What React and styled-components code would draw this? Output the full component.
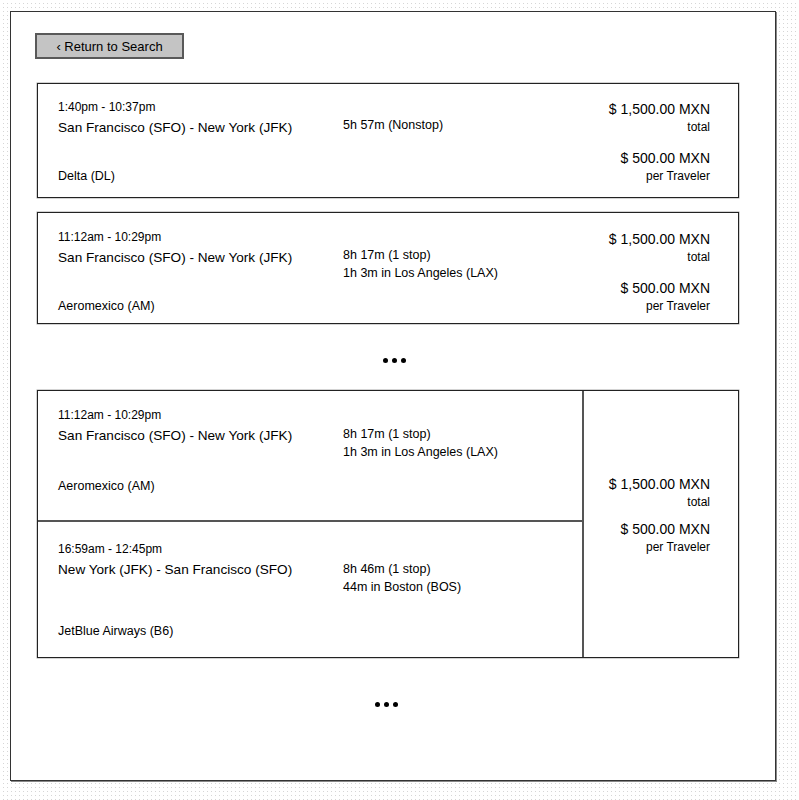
import styled, { createGlobalStyle } from "styled-components";

const GlobalStyle = createGlobalStyle`
  body {
    margin: 0;
    background-color: #fff;
    background-image:
      linear-gradient(to right, #fff 3px, transparent 3px),
      linear-gradient(to bottom, #fff 3px, #d6d6d6 3px);
    background-size: 4px 4px;
    font-family: "Liberation Sans", Arial, sans-serif;
    color: #000;
  }
`;

const Page = styled.div`
  min-height: 800px;
  padding: 11px 0 0 10px;
  box-sizing: border-box;
`;

const Frame = styled.div`
  width: 766px;
  height: 770px;
  box-sizing: border-box;
  border: 1px solid #333;
  box-shadow: 1px 1px 0 #888;
  background: #fff;
  padding: 21px 0 0 24px;
`;

const BackButton = styled.button`
  width: 149px;
  height: 26px;
  box-sizing: border-box;
  border: 2px solid #595959;
  background: #c4c4c4;
  font-family: inherit;
  font-size: 13px;
  color: #000;
  padding: 0;
  cursor: pointer;
`;

const List = styled.div`
  display: flex;
  flex-direction: column;
  margin-left: 2px;
  width: 702px;
`;

const Card = styled.div`
  display: flex;
  box-sizing: border-box;
  border: 1px solid #222;
  box-shadow: 0 0 0 0.5px rgba(0, 0, 0, 0.35);
  margin-top: ${(p) => p.$mt}px;
  padding: ${(p) => p.$pad};
`;

const SplitCard = styled.div`
  display: flex;
  height: 268px;
  box-sizing: border-box;
  border: 1px solid #222;
  box-shadow: 0 0 0 0.5px rgba(0, 0, 0, 0.35);
  margin-top: ${(p) => p.$mt}px;
`;

const Legs = styled.div`
  width: 544px;
  display: flex;
  flex-direction: column;
  border-right: 2px solid #555;
`;

const Leg = styled.div`
  display: flex;
  box-sizing: border-box;
  padding: ${(p) => p.$pad};
  height: ${(p) => (p.$height ? `${p.$height}px` : "auto")};
  flex: ${(p) => (p.$height ? "none" : 1)};
  border-bottom: ${(p) => (p.$divider ? "2px solid #555" : "none")};
`;

const Info = styled.div`
  flex: 1;
  display: flex;
`;

const RouteCol = styled.div`
  width: 285px;
  display: flex;
  flex-direction: column;
`;

const Time = styled.div`
  font-size: 12px;
  line-height: 16px;
`;

const Route = styled.div`
  font-size: 13.6px;
  line-height: 24px;
  margin-top: 1px;
`;

const Airline = styled.div`
  margin-top: auto;
  font-size: 12.5px;
  line-height: 16px;
`;

const DurationCol = styled.div`
  padding-top: ${(p) => p.$pt}px;
  font-size: 12.5px;
  line-height: 18px;
`;

const PriceCol = styled.div`
  display: flex;
  flex-direction: column;
  align-items: flex-end;
  text-align: right;
  padding: ${(p) => p.$pad || "0"};
  flex: ${(p) => (p.$grow ? 1 : "none")};
`;

const Price = styled.div`
  font-size: 14px;
  line-height: 20px;
  margin-top: ${(p) => p.$mt || 0}px;
`;

const PriceNote = styled.div`
  font-size: 12px;
  line-height: 16px;
`;

const Ellipsis = styled.div`
  display: flex;
  justify-content: center;
  gap: 4px;
  margin-top: ${(p) => p.$mt}px;
  padding-left: ${(p) => p.$pl || 0}px;
  padding-right: ${(p) => p.$pr || 0}px;
`;

const Dot = styled.span`
  width: 5px;
  height: 5px;
  border-radius: 50%;
  background: #000;
`;

function FlightInfo({ time, route, airline, duration, layover, pt = 17 }) {
  return (
    <Info>
      <RouteCol>
        <Time>{time}</Time>
        <Route>{route}</Route>
        <Airline>{airline}</Airline>
      </RouteCol>
      <DurationCol $pt={pt}>
        <div>{duration}</div>
        {layover ? <div>{layover}</div> : null}
      </DurationCol>
    </Info>
  );
}

function Prices({ gap = 13, pad, grow }) {
  return (
    <PriceCol $pad={pad} $grow={grow}>
      <Price>$ 1,500.00 MXN</Price>
      <PriceNote>total</PriceNote>
      <Price $mt={gap}>$ 500.00 MXN</Price>
      <PriceNote>per Traveler</PriceNote>
    </PriceCol>
  );
}

function Dots(props) {
  return (
    <Ellipsis {...props}>
      <Dot />
      <Dot />
      <Dot />
    </Ellipsis>
  );
}

export default function App() {
  return (
    <>
      <GlobalStyle />
      <Page>
        <Frame>
          <BackButton>‹ Return to Search</BackButton>
          <List>
            <Card $mt={24} $pad="15px 28px 13px 20px">
              <FlightInfo
                time="1:40pm - 10:37pm"
                route="San Francisco (SFO) - New York (JFK)"
                airline="Delta (DL)"
                duration="5h 57m (Nonstop)"
              />
              <Prices />
            </Card>
            <Card $mt={14} $pad="16px 28px 9px 20px">
              <FlightInfo
                time="11:12am - 10:29pm"
                route="San Francisco (SFO) - New York (JFK)"
                airline="Aeromexico (AM)"
                duration="8h 17m (1 stop)"
                layover="1h 3m in Los Angeles (LAX)"
              />
              <Prices />
            </Card>

            <Dots $mt={34} $pl={13} />

            <SplitCard $mt={27}>
              <Legs>
                <Leg $height={131} $divider $pad="16px 0 26px 20px">
                  <FlightInfo
                    time="11:12am - 10:29pm"
                    route="San Francisco (SFO) - New York (JFK)"
                    airline="Aeromexico (AM)"
                    duration="8h 17m (1 stop)"
                    layover="1h 3m in Los Angeles (LAX)"
                    pt={18}
                  />
                </Leg>
                <Leg $pad="19px 0 18px 20px">
                  <FlightInfo
                    time="16:59am - 12:45pm"
                    route="New York (JFK) - San Francisco (SFO)"
                    airline="JetBlue Airways (B6)"
                    duration="8h 46m (1 stop)"
                    layover="44m in Boston (BOS)"
                    pt={19}
                  />
                </Leg>
              </Legs>
              <Prices gap={9} pad="83px 28px 0 0" grow />
            </SplitCard>

            <Dots $mt={44} $pr={3} />
          </List>
        </Frame>
      </Page>
    </>
  );
}
